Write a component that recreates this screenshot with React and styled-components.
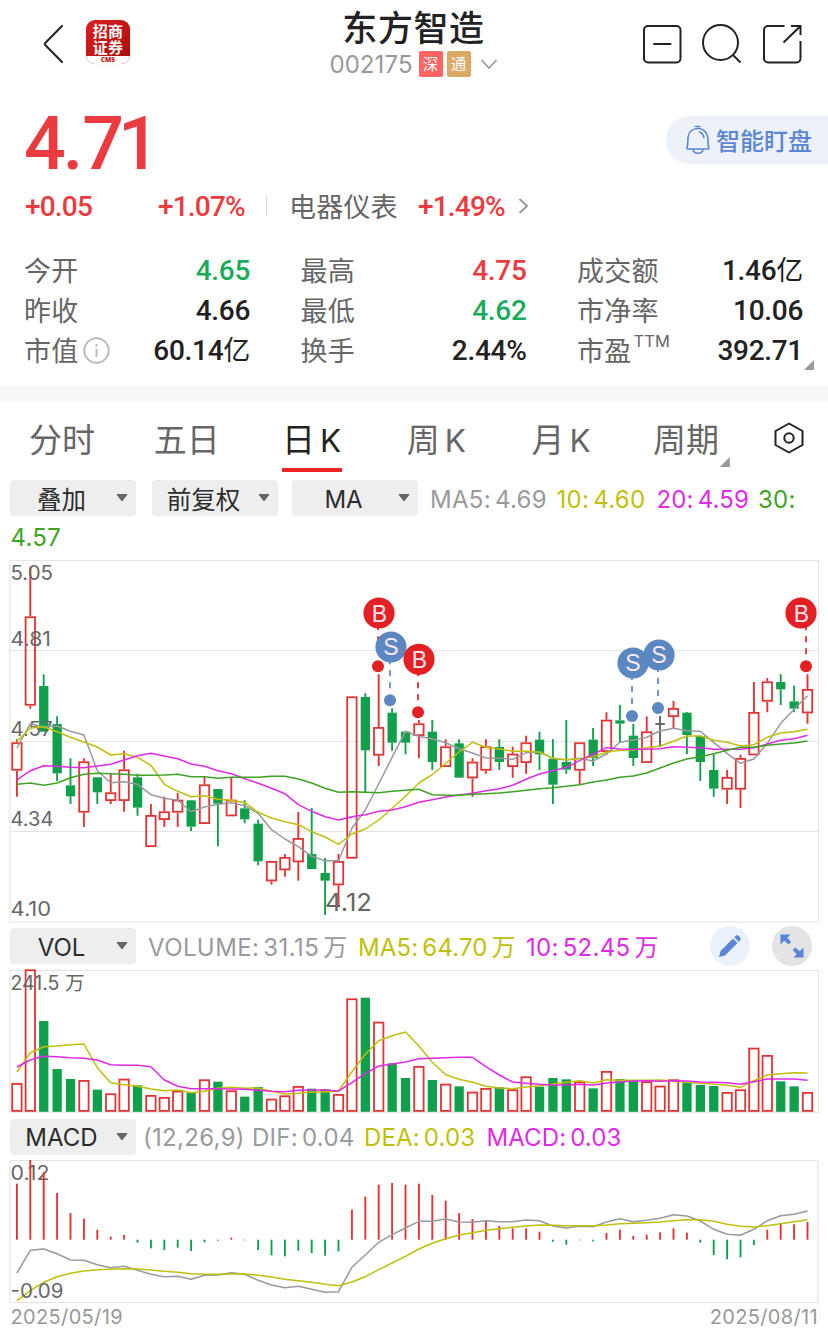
import styled, { createGlobalStyle } from "styled-components"

const RED = "#e23434"
const GREEN = "#10a04b"
const GRAY = "#999a9e"
const YELLOW = "#c0bf0c"
const PINK = "#e02be6"
const LEAF = "#3fa324"

const GlobalStyle = createGlobalStyle`
    *{
        box-sizing: border-box;
    }
    body{
        margin: 0;
        background: #fff;
        font-family: Inter, "Noto Sans CJK SC", sans-serif;
    }
    svg{
        display: block;
    }
`
const Page = styled.div`
    width: 828px;
    height: 1333px;
    overflow: hidden;
    background: #fff;
`
const Header = styled.header`
    display: grid;
    grid-template-columns: 1fr 240px 1fr;
    height: 88px;
    padding: 0 26px 0 42px;
`
const HeaderLeft = styled.div`
    display: flex;
    align-items: center;
    gap: 22px;
    padding-bottom: 3px;
`
const HeaderRight = styled.div`
    display: flex;
    align-items: center;
    justify-content: flex-end;
    gap: 20px;
`
const Logo = styled.div`
    display: flex;
    flex-direction: column;
    width: 44px;
    height: 44px;
    margin-top: -1px;
    border-radius: 9px;
    overflow: hidden;
    background: linear-gradient(135deg, #e02020, #a30c0c);
    box-shadow: 0 0 1px #bbb;
`
const LogoLine = styled.div`
    height: 15.5px;
    margin-top: ${p => p.$mt || 0}px;
    color: #fff;
    font: 700 15px/15px "Noto Sans CJK SC", sans-serif;
    letter-spacing: .3px;
    text-align: center;
`
const LogoFoot = styled.div`
    margin-top: auto;
    height: 8px;
    background: #fff;
    color: #c31a1a;
    font: 800 6.5px/7px "Open Sans", sans-serif;
    text-align: center;
`
const Heading = styled.div`
    display: flex;
    flex-direction: column;
    align-items: center;
    position: relative;
    left: -8.5px;
`
const Title = styled.h1`
    margin: 3px 0 1px;
    color: #222;
    font: 500 35px/46px "Noto Sans CJK SC", sans-serif;
    letter-spacing: .6px;
`
const CodeRow = styled.div`
    display: flex;
    align-items: center;
    height: 28px;
    color: #999;
    font-size: 24px;
    letter-spacing: .1px;
`
const Tag = styled.span`
    width: 24px;
    height: 26px;
    margin-left: 6px;
    border-radius: 2px;
    background: ${p => p.$color};
    color: #fff;
    font: 15.5px/25px "Noto Sans CJK SC", sans-serif;
    letter-spacing: 0;
    text-align: center;
    & + &{
        margin-left: 4px;
    }
    & + svg{
        margin-left: 9px;
    }
`
const PriceRow = styled.div`
    display: flex;
    justify-content: space-between;
    height: 98px;
    padding: 0 0 0 24px;
`
const Price = styled.div`
    color: #ec3b40;
    font: 500 73.5px/112px Roboto, sans-serif;
    letter-spacing: -6px;
    span{
        margin: 0 5px 0 3px;
    }
`
const Watch = styled.div`
    display: flex;
    align-items: center;
    gap: 6px;
    width: 162px;
    height: 48px;
    margin-top: 28px;
    padding: 0 0 1px 20px;
    border-radius: 24px 0 0 24px;
    background: #ecf1fa;
    color: #5b85d6;
    font: 500 24px/46px "Noto Sans CJK SC", sans-serif;
`
const ChangeRow = styled.div`
    display: flex;
    align-items: center;
    height: 40px;
    padding-left: 25px;
    color: #666;
    font-size: 27px;
    line-height: 40px;
`
const Change = styled.span`
    width: ${p => p.$w}px;
    padding-top: 1px;
    color: #ec3b40;
    font: 500 28px/40px Roboto, sans-serif;
    letter-spacing: -.8px;
`
const Sep = styled.span`
    width: 1px;
    height: 20px;
    margin-right: 22px;
    background: #ddd;
`
const Industry = styled.span`
    width: 129px;
    padding-top: 3px;
    letter-spacing: .2px;
`
const Stats = styled.div`
    display: grid;
    grid-template-columns: 226px 226px 226px;
    column-gap: 50.5px;
    grid-auto-rows: 40px;
    height: 145px;
    padding: 10px 0 0 24px;
    margin-top: 15px;
    position: relative;
`
const Stat = styled.div`
    display: flex;
    align-items: center;
    justify-content: space-between;
    line-height: 40px;
    height: 40px;
`
const StatLabel = styled.span`
    display: flex;
    align-items: center;
    gap: 4px;
    padding-top: 2px;
    color: #666;
    font-size: 27px;
    letter-spacing: .3px;
    svg{
        margin-top: -4px;
    }
    sup{
        align-self: flex-start;
        margin-left: -2px;
        font-size: 16.5px;
        line-height: 18px;
        letter-spacing: 0;
    }
`
const StatValue = styled.span`
    color: ${p => p.$color || "#222"};
    font: 500 28px/40px Roboto, "Noto Sans CJK SC", sans-serif;
    letter-spacing: -.3px;
    i{
        font-style: normal;
        font-weight: 400;
        font-size: 27px;
    }
`
const Corner = styled.span`
    position: absolute;
    right: ${p => p.$right}px;
    bottom: ${p => p.$bottom}px;
    width: 10px;
    height: 10px;
    background: #999;
    clip-path: polygon(100% 0, 100% 100%, 0 100%);
`
const Band = styled.div`
    height: 16px;
    background: #f7f7f7;
`
const Tabs = styled.nav`
    display: grid;
    grid-template-columns: repeat(6, 124.8px) 1fr;
    height: 74px;
`
const Tab = styled.div`
    position: relative;
    display: flex;
    justify-content: center;
    gap: 5px;
    padding-right: 1px;
    color: ${p => (p.$active ? "#222" : "#666")};
    font-size: 33px;
    line-height: 77px;
    height: 74px;
    &::after{
        content: "";
        display: ${p => (p.$active ? "block" : "none")};
        position: absolute;
        left: 32px;
        bottom: 4px;
        width: 60px;
        height: 4px;
        background: #ee2424;
    }
`
const Latin = styled.span`
    font-size: 31.5px;
`
const Gear = styled.div`
    display: flex;
    justify-content: center;
    padding: 20px 0 0 2px;
`
const Toolbar = styled.div`
    display: flex;
    align-items: center;
    height: ${p => p.$h}px;
    padding: 0 16px 0 10px;
`
const Select = styled.div`
    display: flex;
    align-items: center;
    justify-content: flex-end;
    width: 126px;
    height: 36px;
    margin-right: ${p => p.$mr}px;
    padding-right: 8px;
    border-radius: 4px;
    background: #eee;
    color: #2c2c2c;
    font-size: ${p => (p.$latin ? 24 : 24.5)}px;
    line-height: 36px;
    span{
        flex: 1;
        text-align: center;
        padding: 3px 3px 0 0;
    }
`
const Legend = styled.span`
    color: ${p => p.$color};
    padding-top: 3px;
    font-size: 24px;
    line-height: 36px;
    white-space: nowrap;
    width: ${p => p.$w}px;
    letter-spacing: ${p => p.$ls ?? .3}px;
    i{
        display: inline-block;
        width: ${p => p.$gap || 4}px;
    }
`
const LegendWrap = styled.div`
    height: 40px;
    padding: 0 0 0 10.5px;
`
const RoundButton = styled.div`
    display: flex;
    align-items: center;
    justify-content: center;
    width: 40px;
    height: 40px;
    margin-left: ${p => p.$ml}px;
    border-radius: 50%;
    background: ${p => p.$bg};
`
const Dates = styled.div`
    display: flex;
    justify-content: space-between;
    padding: 0 10px 0 10.5px;
    color: #999;
    font-size: 20px;
    line-height: 28px;
    letter-spacing: .35px;
`

// kind, high, body top, body bottom, low: in thirds of a pixel
const CANDLES = [
    ["r", 568, 577, 662, 740], ["r", 50, 199, 467, 476], ["g", 373, 408, 545, 545], ["g", 499, 522, 670, 693],
    ["g", 625, 706, 739, 762], ["r", 625, 634, 788, 831], ["g", 681, 682, 727, 762], ["r", 671, 727, 753, 762],
    ["r", 602, 658, 753, 785], ["g", 671, 682, 773, 797], ["r", 762, 795, 891, 891], ["r", 740, 784, 810, 831],
    ["r", 729, 749, 788, 831], ["g", 750, 751, 830, 843], ["r", 681, 703, 822, 822], ["g", 717, 717, 761, 889],
    ["r", 681, 749, 799, 799], ["g", 751, 775, 808, 820], ["g", 809, 821, 934, 946], ["r", 933, 933, 994, 1004],
    ["r", 912, 921, 961, 980], ["r", 786, 864, 937, 992], ["g", 774, 912, 957, 957], ["g", 924, 969, 992, 1095],
    ["r", 912, 933, 1006, 1072], ["r", 439, 439, 926, 926], ["g", 430, 441, 601, 726], ["r", 373, 531, 617, 648],
    ["g", 475, 488, 578, 602], ["g", 545, 545, 578, 613], ["r", 510, 520, 558, 625], ["g", 510, 545, 636, 660],
    ["r", 568, 589, 651, 651], ["g", 568, 580, 683, 683], ["r", 625, 635, 685, 740], ["r", 568, 589, 662, 671],
    ["g", 568, 591, 636, 660], ["r", 590, 611, 651, 683], ["r", 557, 577, 639, 671], ["g", 545, 569, 613, 660],
    ["g", 568, 626, 704, 762], ["g", 510, 636, 659, 671], ["r", 577, 577, 662, 704], ["g", 534, 569, 624, 648],
    ["r", 487, 509, 606, 614], ["g", 465, 511, 521, 578], ["g", 522, 557, 624, 648], ["r", 499, 544, 639, 639],
    ["x", 499, 519, 525, 590], ["r", 453, 474, 501, 534], ["g", 486, 488, 555, 613], ["g", 557, 558, 636, 693],
    ["g", 613, 660, 716, 740], ["r", 660, 681, 719, 762], ["r", 614, 624, 719, 774], ["r", 396, 486, 616, 616],
    ["r", 384, 394, 455, 487], ["g", 373, 396, 418, 465], ["g", 407, 454, 476, 487], ["r", 373, 417, 490, 521],
]
const MA5 = [594, 521, 530, 528, 544, 555, 662, 698, 695, 703, 734, 745, 751, 785, 771, 763, 758, 767, 790, 839, 867, 890, 919, 932, 932, 835, 780, 702, 622, 544, 559, 567, 578, 596, 609, 624, 625, 628, 608, 605, 625, 630, 625, 633, 612, 577, 570, 562, 543, 535, 542, 544, 577, 610, 640, 627, 580, 520, 478, 437]
const MA10 = [574, 534, 530, 545, 562, 576, 591, 615, 611, 622, 646, 703, 724, 740, 737, 748, 751, 758, 787, 804, 815, 824, 845, 861, 883, 852, 837, 810, 775, 739, 699, 674, 640, 606, 577, 592, 597, 604, 604, 607, 625, 629, 626, 620, 607, 601, 600, 593, 588, 574, 558, 558, 571, 577, 588, 584, 562, 549, 545, 538]
const MA20 = [690, 662, 647, 649, 652, 653, 648, 643, 630, 617, 610, 618, 626, 642, 649, 662, 671, 686, 700, 715, 731, 764, 784, 800, 810, 800, 794, 784, 780, 770, 757, 749, 741, 735, 730, 722, 716, 706, 688, 672, 662, 652, 632, 613, 593, 597, 598, 598, 596, 590, 592, 593, 598, 598, 598, 593, 582, 571, 566, 556]
const MA30 = [703, 699, 706, 699, 683, 673, 670, 671, 673, 676, 676, 675, 673, 680, 680, 685, 682, 682, 682, 679, 679, 687, 699, 715, 727, 725, 727, 728, 724, 721, 718, 734, 736, 736, 733, 731, 729, 725, 721, 716, 713, 709, 704, 696, 690, 682, 678, 669, 654, 639, 627, 620, 611, 601, 592, 592, 586, 582, 579, 573]

const VOLUMES = [489, 148, 303, 447, 477, 480, 509, 520, 476, 496, 525, 531, 512, 517, 478, 485, 511, 530, 501, 536, 526, 498, 506, 508, 522, 235, 233, 305, 430, 474, 438, 480, 491, 499, 515, 504, 502, 508, 469, 500, 474, 478, 484, 505, 453, 477, 482, 484, 497, 478, 488, 495, 498, 516, 508, 383, 405, 484, 499, 516]
const VMA5 = [456, 398, 380, 378, 374, 372, 443, 488, 494, 499, 507, 512, 510, 518, 514, 505, 502, 505, 504, 514, 522, 520, 516, 516, 513, 455, 403, 362, 347, 336, 378, 427, 464, 478, 487, 499, 504, 506, 501, 497, 492, 487, 482, 489, 479, 481, 481, 481, 480, 484, 487, 490, 492, 496, 502, 482, 465, 461, 458, 459]
const VMA10 = [441, 420, 409, 410, 413, 415, 420, 434, 436, 436, 440, 480, 499, 506, 506, 506, 507, 508, 511, 514, 515, 511, 510, 510, 513, 488, 460, 438, 432, 426, 416, 415, 413, 412, 412, 440, 465, 486, 490, 493, 495, 495, 493, 495, 489, 486, 483, 482, 484, 482, 483, 486, 487, 488, 493, 485, 477, 477, 477, 481]

const MACD = [212, 141, 178, 240, 300, 317, 350, 371, 366, 389, 406, 411, 404, 414, 388, 383, 374, 382, 411, 427, 430, 413, 420, 428, 415, 290, 251, 215, 210, 215, 212, 246, 263, 300, 318, 322, 339, 346, 346, 356, 386, 395, 382, 385, 360, 350, 369, 365, 358, 346, 359, 389, 426, 439, 433, 396, 350, 330, 334, 327]
const DIF = [480, 412, 408, 422, 441, 442, 455, 464, 460, 472, 484, 491, 490, 499, 487, 486, 479, 484, 502, 516, 524, 520, 529, 538, 536, 463, 426, 388, 365, 345, 325, 325, 318, 327, 328, 323, 326, 326, 321, 323, 339, 345, 340, 341, 327, 317, 326, 322, 316, 305, 309, 324, 349, 364, 367, 349, 323, 308, 304, 294]
const DEA = [563, 533, 508, 491, 481, 474, 470, 469, 467, 468, 471, 475, 478, 482, 484, 484, 483, 483, 487, 492, 499, 503, 508, 514, 518, 507, 491, 470, 450, 430, 408, 391, 377, 366, 359, 352, 347, 343, 339, 336, 337, 338, 338, 338, 336, 332, 331, 329, 327, 323, 320, 320, 325, 334, 340, 342, 338, 332, 326, 320]

// letter, badge x, badge y, dot x, dot y
const MARKS = [
    ["B", 379, 63, 378, 116.2],
    ["S", 391, 97, 390, 150.2],
    ["B", 419, 109.3, 418, 162.3],
    ["S", 633, 113, 632, 166],
    ["S", 659, 105, 658, 158],
    ["B", 801, 63, 806, 116.2],
]

const colX = i => 16.9 + i * 13.4

function Line({ data, color }) {
    const points = data.map((v, i) => `${colX(i).toFixed(1)},${(v / 3).toFixed(1)}`).join(" ")
    return <polyline points={points} fill="none" stroke={color} strokeWidth="1.5" strokeLinejoin="round" />
}

function Label({ x, y, w, size = 19.5, children }) {
    return (
        <text x={x} y={y} textLength={w} lengthAdjust="spacingAndGlyphs" fontSize={size} fill="#666">{children}</text>
    )
}

function Bar({ x, top, bottom, hollow }) {
    if (hollow) {
        return <rect x={x - 4.7} y={top + .9} width="9.4" height={bottom - top - 1.8} fill="none" stroke={RED} strokeWidth="1.8" />
    }
    return <rect x={x - 4.6} y={top} width="9.3" height={bottom - top} fill={GREEN} />
}

function Candle({ i, c }) {
    const [kind, high, top, bottom, low] = [c[0], ...c.slice(1).map(v => v / 3)]
    const x = colX(i)
    const color = { r: RED, g: GREEN, x: "#666" }[kind]
    return (
        <g>
            <path d={`M${x} ${high}V${top}M${x} ${bottom}V${low}`} stroke={color} strokeWidth="1.9" />
            {kind === "x"
                ? <path d={`M${x} ${high}V${low}M${x - 4.7} 174h9.4`} stroke={color} strokeWidth="1.8" />
                : <Bar x={x} top={top} bottom={bottom} hollow={kind === "r"} />}
        </g>
    )
}

function Mark({ m }) {
    const [letter, bx, by, x, y] = m
    const color = letter === "B" ? "#e32023" : "#5b87c2"
    return (
        <g>
            <path d={`M${x} ${y - 12}V${by}`} stroke={color} strokeWidth="1.7" strokeDasharray="6 6" />
            <circle cx={x} cy={y} r="6" fill={color} />
            <circle cx={bx} cy={by} r="15.6" fill={color} />
            <text x={bx + (letter === "B" ? .5 : 0)} y={by + (letter === "B" ? 9 : 8)} textAnchor="middle" fontSize="23" fontFamily="Liberation Sans, sans-serif" fill="#fbe9f0">{letter}</text>
        </g>
    )
}

function PriceChart() {
    return (
        <svg width="828" height="368" viewBox="0 10 828 368">
            <path d="M10 10.5H818.5V372H10ZM10 100.5H818M10 191.5H818M10 281.5H818" fill="none" stroke="#e4e4e4" strokeWidth="1.2" />
            {CANDLES.map((c, i) => <Candle key={i} i={i} c={c} />)}
            <Label x="10.5" y="30" w="42.5">5.05</Label>
            <Label x="10.5" y="96" w="40.5">4.81</Label>
            <Label x="10.5" y="186" w="42">4.57</Label>
            <Label x="10.5" y="276" w="43">4.34</Label>
            <Label x="10.5" y="366" w="40.5">4.10</Label>
            <Label x="325" y="361" w="47" size={24}>4.12</Label>
            <Line data={MA5} color={GRAY} />
            <Line data={MA10} color={YELLOW} />
            <Line data={MA20} color={PINK} />
            <Line data={MA30} color={LEAF} />
            {MARKS.map((m, i) => <Mark key={i} m={m} />)}
        </svg>
    )
}

function VolumeChart() {
    return (
        <svg width="828" height="146" viewBox="0 48 828 146">
            <path d="M10 50.5H818.5V192.2H10Z" fill="none" stroke="#e4e4e4" strokeWidth="1.2" />
            {VOLUMES.map((v, i) => (
                <Bar key={i} x={colX(i)} top={v / 3} bottom={191.8} hollow={CANDLES[i][0] !== "g"} />
            ))}
            <Label x="10.5" y="70" w="74">241.5 万</Label>
            <Line data={VMA5} color={YELLOW} />
            <Line data={VMA10} color={PINK} />
        </svg>
    )
}

function MacdChart() {
    return (
        <svg width="828" height="144" viewBox="0 46 828 144">
            <path d="M10 47.5H818V189.5H10Z" fill="none" stroke="#e4e4e4" strokeWidth="1.2" />
            <Label x="10.5" y="67" w="39">0.12</Label>
            {MACD.map((v, i) => (
                <path key={i} d={`M${colX(i)} 126.7V${v / 3}`} stroke={v < 380 ? RED : GREEN} strokeWidth="1.9" />
            ))}
            <Line data={DIF} color={GRAY} />
            <Line data={DEA} color={YELLOW} />
            <Label x="10.5" y="185" w="53">-0.09</Label>
        </svg>
    )
}

function Dropdown({ children, ...rest }) {
    return (
        <Select {...rest}>
            <span>{children}</span>
            <svg width="12" height="8"><path d="M1 .5h10L6 7z" fill="#666" stroke="#666" strokeLinejoin="round" /></svg>
        </Select>
    )
}

function StatItem({ label, value, unit, color, extra }) {
    return (
        <Stat>
            <StatLabel>{label}{extra}</StatLabel>
            <StatValue $color={color}>{value}{unit && <i>{unit}</i>}</StatValue>
        </Stat>
    )
}

const InfoIcon = () => (
    <svg width="27" height="27" viewBox="0 0 27 27" fill="none" stroke="#bbb" strokeWidth="2">
        <circle cx="13.5" cy="13.5" r="12.2" />
        <path d="M13.5 11.5V20M13.5 7v2.4" />
    </svg>
)

export default function App() {
    return (
        <Page>
            <GlobalStyle />
            <Header>
                <HeaderLeft>
                    <svg width="22" height="40" viewBox="0 0 22 40" fill="none" stroke="#222" strokeWidth="2" strokeLinecap="round" strokeLinejoin="round">
                        <path d="M20 3 3 20.300a1.400 1.400 0 0 0 0 1.500L20 39" />
                    </svg>
                    <Logo>
                        <LogoLine $mt={3}>招商</LogoLine>
                        <LogoLine>证券</LogoLine>
                        <LogoFoot>CMS</LogoFoot>
                    </Logo>
                </HeaderLeft>
                <Heading>
                    <Title>东方智造</Title>
                    <CodeRow>
                        002175
                        <Tag $color="#ff6464">深</Tag>
                        <Tag $color="#dba964">通</Tag>
                        <svg width="18" height="12" fill="none" stroke="#999" strokeWidth="1.6"><path d="m1.500 2 7.500 8 7.500-8" /></svg>
                    </CodeRow>
                </Heading>
                <HeaderRight>
                    <svg width="40" height="40" viewBox="0 0 40 40" fill="none" stroke="#222" strokeWidth="2" strokeLinecap="round">
                        <rect x="2" y="2" width="36.5" height="36.5" rx="4" />
                        <path d="M12 20h16.5" />
                    </svg>
                    <svg width="40" height="40" viewBox="0 0 40 40" fill="none" stroke="#222" strokeWidth="2">
                        <circle cx="18.5" cy="18.5" r="17.5" />
                        <path d="m31 31 7.500 7.500" />
                    </svg>
                    <svg width="40" height="40" viewBox="0 0 40 40" fill="none" stroke="#222" strokeWidth="2">
                        <path d="M22.5 2H6a4 4 0 0 0-4 4v28.500a4 4 0 0 0 4 4h28.500a4 4 0 0 0 4-4V17M21.500 18.500 38 2.500M29 2h9.500v9" />
                    </svg>
                </HeaderRight>
            </Header>
            <PriceRow>
                <Price>4<span>.</span>71</Price>
                <Watch>
                    <svg width="24" height="30" viewBox="0 0 24 30" fill="none" stroke="#5b85d6" strokeWidth="1.6" strokeLinecap="round" strokeLinejoin="round">
                        <path d="M9.500 1.500h4.500M1.500 24c-.5 0-.7-.5-.6-1 1.200-3 .6-6 1.200-11C2.800 7 6.500 3.500 11.800 3.500S21 7 21.700 12c.5 5 0 8 1.200 11 .1.500-.1 1-.6 1zM7 24.500c.6 5 9.400 5 10 0M13.500 7c2.500.8 4 2.800 4.300 5.500" />
                    </svg>
                    智能盯盘
                </Watch>
            </PriceRow>
            <ChangeRow>
                <Change $w={133}>+0.05</Change>
                <Change $w={108}>+1.07%</Change>
                <Sep />
                <Industry>电器仪表</Industry>
                <Change $w={100}>+1.49%</Change>
                <svg width="11" height="16" fill="none" stroke="#999" strokeWidth="2"><path d="m1.500 1 7.500 7-7.500 7" /></svg>
            </ChangeRow>
            <Stats>
                <StatItem label="今开" value="4.65" color="#1aab5c" />
                <StatItem label="最高" value="4.75" color="#ec3b40" />
                <StatItem label="成交额" value="1.46" unit="亿" />
                <StatItem label="昨收" value="4.66" />
                <StatItem label="最低" value="4.62" color="#1aab5c" />
                <StatItem label="市净率" value="10.06" />
                <StatItem label="市值" value="60.14" unit="亿" extra={<InfoIcon />} />
                <StatItem label="换手" value="2.44%" />
                <StatItem label="市盈" value="392.71" extra={<sup>TTM</sup>} />
                <Corner $right={14} $bottom={16} />
            </Stats>
            <Band />
            <Tabs>
                <Tab>分时</Tab>
                <Tab>五日</Tab>
                <Tab $active><span>日</span><Latin>K</Latin></Tab>
                <Tab><span>周</span><Latin>K</Latin></Tab>
                <Tab><span>月</span><Latin>K</Latin></Tab>
                <Tab>周期<Corner $right={19} $bottom={9} /></Tab>
                <Gear>
                    <svg width="30" height="32" viewBox="0 0 30 32" fill="none" stroke="#222" strokeWidth="2" strokeLinejoin="round">
                        <path d="M15 1.500 28.500 9v14L15 30.500 1.500 23V9z" />
                        <circle cx="15" cy="16" r="4.700" />
                    </svg>
                </Gear>
            </Tabs>
            <Toolbar $h={44}>
                <Dropdown $mr={16}>叠加</Dropdown>
                <Dropdown $mr={14}>前复权</Dropdown>
                <Dropdown $mr={12} $latin>MA</Dropdown>
                <Legend $color={GRAY} $w={126.5}>MA5:<i />4.69</Legend>
                <Legend $color={YELLOW} $w={100}>10:<i />4.60</Legend>
                <Legend $color={PINK} $w={101.5} $ls={.15}>20:<i />4.59</Legend>
                <Legend $color={LEAF}>30:</Legend>
            </Toolbar>
            <LegendWrap><Legend $color={LEAF}>4.57</Legend></LegendWrap>
            <PriceChart />
            <Toolbar $h={36}>
                <Dropdown $mr={12} $latin>VOL</Dropdown>
                <Legend $color={GRAY} $w={210} $ls={.4}>VOLUME:<i />31.15<i />万</Legend>
                <Legend $color={YELLOW} $w={168} $ls={.15}>MA5:<i />64.70<i />万</Legend>
                <Legend $color={PINK} $w={132}>10:<i />52.45<i />万</Legend>
                <RoundButton $ml={52} $bg="#ebf1fb">
                    <svg width="24" height="24" viewBox="0 0 24 24" fill="#5b85d6">
                        <path d="m1 23 1.500-6L15 4.500 19.500 9 7 21.500zM16.200 3.300l1.600-1.600c1.800-1.800 6.300 2.700 4.500 4.500l-1.600 1.600z" />
                    </svg>
                </RoundButton>
                <RoundButton $ml={22} $bg="#e4e4e6">
                    <svg width="24" height="24" viewBox="0 0 24 24" fill="#5b85d6">
                        <path d="M.5.5H10.500L7.300 3.700 11.200 8 8.700 10.500 4.200 6.800.5 10.500zM23.500 23.500H13.500l3.200-3.200-4-4.300 2.500-2.500 4.500 3.800 3.800-3.800z" />
                    </svg>
                </RoundButton>
            </Toolbar>
            <Toolbar $h={4} />
            <VolumeChart />
            <Toolbar $h={45}>
                <Dropdown $mr={7} $latin>MACD</Dropdown>
                <Legend $color={GRAY} $w={221}>(12,26,9) DIF:<i />0.04</Legend>
                <Legend $color={YELLOW} $w={122.5} $ls={.15}>DEA:<i />0.03</Legend>
                <Legend $color={PINK} $w={140} $ls={.1}>MACD:<i />0.03</Legend>
            </Toolbar>
            <MacdChart />
            <Dates><span>2025/05/19</span><span>2025/08/11</span></Dates>
        </Page>
    )
}
